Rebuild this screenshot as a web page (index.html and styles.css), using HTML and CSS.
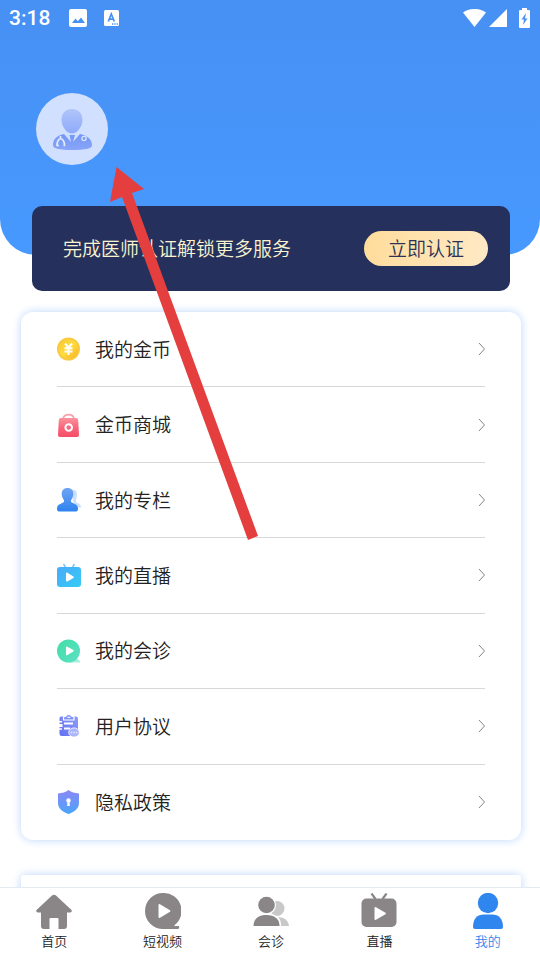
FILE: index.html
```html
<!DOCTYPE html>
<html lang="zh-CN">
<head>
<meta charset="utf-8">
<meta name="viewport" content="width=device-width, initial-scale=1">
<title>我的</title>
<link rel="stylesheet" href="styles.css">
</head>
<body>
<main class="page">
  <header class="hero">
    <div class="status">
      <span class="clock">3:18</span>
      <svg class="status-image" width="18" height="18" viewBox="0 0 18 18"><rect width="18" height="18" rx="2" fill="#fff"/><path d="M3 14l3.500-4.500 2.300 2.800L12 8.500l4 5.500z" fill="#4791f5"/></svg>
      <svg class="status-lang" width="15" height="16" viewBox="0 0 15 16"><rect width="15" height="16" rx="1.500" fill="#fff"/><path d="M4.300 11.500L7.300 4l3 7.500M5.300 9.200h4" fill="none" stroke="#4791f5" stroke-width="1.700"/><path d="M8 14h1.300M10.300 14h1.300M12.600 14h1.300" stroke="#4791f5" stroke-width="1.300"/></svg>
      <span class="status-right">
        <svg width="23" height="18" viewBox="0 0 23 18"><path d="M0 3.500C6.500-1.200 16.500-1.200 23 3.500L11.500 18z" fill="#fff"/></svg>
        <svg width="18" height="18" viewBox="0 0 18 18"><path d="M18 0v18H0z" fill="#fff"/></svg>
        <svg class="battery" width="11" height="20" viewBox="0 0 11 20"><path d="M3 0h5v2h2q1 0 1 1v16q0 1-1 1H1q-1 0-1-1V3q0-1 1-1h2z" fill="#fff"/><path d="M7 5L2.500 11.500H5L4 17l4.500-6.500H6z" fill="#4791f5"/></svg>
      </span>
    </div>
    <a class="avatar" href="#profile" aria-label="个人资料">
      <svg width="72" height="72" viewBox="0 0 72 72">
        <defs><linearGradient id="doc" x1="0" y1="0" x2="0" y2="1"><stop offset="0" stop-color="#b0c5fb"/><stop offset="1" stop-color="#8faafa"/></linearGradient><linearGradient id="coat" x1="0" y1="0" x2="0" y2="1"><stop offset="0" stop-color="#7596f3"/><stop offset="1" stop-color="#88a5fa"/></linearGradient></defs>
        <circle cx="36" cy="36" r="36" fill="#d0e0fe"/>
        <path d="M36 16c7 0 11 5 10.400 12-.4 6-5.400 12.500-10.400 12.500S26 34 25.600 28C25 21 29 16 36 16z" fill="url(#doc)"/>
        <path d="M28 41l7 8-1.500-7h5.500l-2 7L44 41c8 2 12 5.500 12 11.500 0 3-7 4.500-19.500 4.500S17 55.500 17 52.500C17 46.500 20 43 28 41z" fill="url(#coat)"/>
        <path d="M24.500 43v2.500c-2.500 1-3.500 3-3.500 7h2m4.500 0h1c0-4-1-6-4-7" fill="none" stroke="#e3edff" stroke-width="1.700"/>
        <circle cx="48" cy="45.500" r="2.100" fill="none" stroke="#d9e6ff" stroke-width="1.300"/>
      </svg>
    </a>
  </header>

  <section class="banner">
    <p class="banner-text">完成医师认证解锁更多服务</p>
    <button class="banner-button" type="button">立即认证</button>
  </section>

  <nav class="menu" aria-label="菜单">
    <a class="row" href="#coins">
      <svg class="icon" viewBox="0 0 24 24"><defs><linearGradient id="gold" x1="0" y1="0" x2="1" y2="1"><stop offset="0" stop-color="#f8c535"/><stop offset=".5" stop-color="#ffdc3e"/><stop offset="1" stop-color="#f8ad27"/></linearGradient></defs><circle cx="11.500" cy="12" r="11.500" fill="#f9c940"/><circle cx="11.500" cy="12" r="9.800" fill="url(#gold)"/><path d="M8 6.500l3.500 4L15 6.500M11.500 10.500v7.500M7.500 11.200h8M7.500 14.500h8" fill="none" stroke="#fff" stroke-width="2"/></svg>
      <span class="label">我的金币</span><svg class="chevron" viewBox="0 0 8 14"><path d="M2 1l5.500 6L2 13"/></svg>
    </a>
    <a class="row" href="#shop">
      <svg class="icon" viewBox="0 0 24 24"><defs><linearGradient id="bag" x1="0" y1="0" x2="0" y2="1"><stop offset="0" stop-color="#fa929c"/><stop offset=".5" stop-color="#f9657c"/><stop offset="1" stop-color="#f64d68"/></linearGradient></defs><path d="M6 6C7 .2 16.500 .2 17 6" fill="none" stroke="#f9a5ae" stroke-width="1.800"/><path d="M4 5h15q2 0 2.200 2L22 22q0 2-2 2H3q-2 0-2-2L1.800 7Q2 5 4 5z" fill="url(#bag)"/><circle cx="11.700" cy="14.500" r="3.300" fill="none" stroke="#fff" stroke-width="2"/></svg>
      <span class="label">金币商城</span><svg class="chevron" viewBox="0 0 8 14"><path d="M2 1l5.500 6L2 13"/></svg>
    </a>
    <a class="row" href="#columns">
      <svg class="icon" viewBox="0 0 24 24"><defs><linearGradient id="usr" x1="0" y1="0" x2="0" y2="1"><stop offset="0" stop-color="#70a4f3"/><stop offset="1" stop-color="#2d83ef"/></linearGradient></defs><path d="M13 1.500c8-1 7.500 5 6.500 8.500-1 4-1 4 2 5.500 2 1 2.500 2 2.500 4h-6z" fill="#cbdffb"/><path d="M10.500 0c5 0 6.500 4 5.500 8-.7 3-2.500 4-2 5.500.5 2 7 2 7 7 0 2.500-1 3-3 3H3c-2 0-3-.5-3-3 0-5 6.500-5 7-7C7.500 12 5.700 11 5 8 4 4 5.500 0 10.500 0z" fill="url(#usr)"/></svg>
      <span class="label">我的专栏</span><svg class="chevron" viewBox="0 0 8 14"><path d="M2 1l5.500 6L2 13"/></svg>
    </a>
    <a class="row" href="#live">
      <svg class="icon" viewBox="0 0 24 24"><defs><linearGradient id="tv" x1="0" y1="0" x2="1" y2="1"><stop offset="0" stop-color="#4aaaf8"/><stop offset="1" stop-color="#34ccf5"/></linearGradient></defs><path d="M6.500 1L9 5M17.500 1L15 5" stroke="#80c8f8" stroke-width="1.500"/><rect y="4" width="24" height="20" rx="3" fill="url(#tv)"/><path d="M9 10.500q0-1.500 1.400-.8l6 3.700q1 .8 0 1.500l-6 3.500Q9 19 9 17.500z" fill="#fff"/></svg>
      <span class="label">我的直播</span><svg class="chevron" viewBox="0 0 8 14"><path d="M2 1l5.500 6L2 13"/></svg>
    </a>
    <a class="row" href="#consult">
      <svg class="icon" viewBox="0 0 24 24"><defs><linearGradient id="green" x1="0" y1="0" x2="1" y2="1"><stop offset="0" stop-color="#43dda6"/><stop offset="1" stop-color="#5de1c6"/></linearGradient></defs><path d="M12 20l7-1 4 3v1.500H12z" fill="#aaf0df"/><circle cx="11.500" cy="12" r="11.500" fill="url(#green)"/><path d="M9 8.500q0-1.500 1.400-.8l6 3.300q1 .8 0 1.500l-6 3.500Q9 17 9 15.500z" fill="#fff"/></svg>
      <span class="label">我的会诊</span><svg class="chevron" viewBox="0 0 8 14"><path d="M2 1l5.500 6L2 13"/></svg>
    </a>
    <a class="row" href="#terms">
      <svg class="icon" viewBox="0 0 24 24"><defs><linearGradient id="clip" x1="1" y1="0" x2="0" y2="1"><stop offset="0" stop-color="#8e9dfa"/><stop offset="1" stop-color="#626ff0"/></linearGradient></defs><path d="M4 2.500h15q2 0 2 2V20q0 2-2 2H5q-2.500 0-2.500-2.500V4.500q0-2 1.500-2z" fill="url(#clip)"/><path d="M0 7.800h5M0 15h5" stroke="#fff" stroke-width="1.400"/><path d="M2 11.500h3.500" stroke="#fff" stroke-width="3"/><path d="M7 9.500h9M7 14.500h6" stroke="#fff" stroke-width="1.800"/><path d="M6.500 3L9 2q.8-1.700 2.700-1.700T14.500 2L17 3v3H6.500z" fill="#7f90f8" stroke="#fff" stroke-width="1.200"/><path d="M10.300 3.300h3" stroke="#fff" stroke-width="1.200"/><ellipse cx="17" cy="18.500" rx="5.300" ry="4.600" fill="#a9b5fb" stroke="#fff" stroke-width=".8"/><path d="M13.800 18.500h1.400M16.300 18.500h1.400M18.800 18.500h1.400" stroke="#e8ecff" stroke-width="1.300"/></svg>
      <span class="label">用户协议</span><svg class="chevron" viewBox="0 0 8 14"><path d="M2 1l5.500 6L2 13"/></svg>
    </a>
    <a class="row" href="#privacy">
      <svg class="icon" viewBox="0 0 24 24"><defs><linearGradient id="shield" x1="0" y1="0" x2="0" y2="1"><stop offset="0" stop-color="#8c87f5"/><stop offset="1" stop-color="#4aa5fb"/></linearGradient></defs><path d="M11.500 0c3 2.500 6 3 10.500 3.500V13c0 6-5 9-10.500 11C6 22 1 19 1 13V3.500C5.500 3 8.500 2.500 11.500 0z" fill="url(#shield)"/><circle cx="11.500" cy="10.500" r="2.200" fill="#fff"/><path d="M10.600 11h1.800l.5 5h-2.800z" fill="#fff"/></svg>
      <span class="label">隐私政策</span><svg class="chevron" viewBox="0 0 8 14"><path d="M2 1l5.500 6L2 13"/></svg>
    </a>
  </nav>
  <section class="next-card"></section>
</main>

<nav class="tabs" aria-label="主导航">
  <a class="tab" href="#home">
    <svg width="36" height="36" viewBox="0 0 36 36"><path d="M16 2.500q2-1.500 4 0L35.500 17q1 1.500-1 2.500H31V33q0 3-3 3h-5.500V26q0-1-1-1h-7q-1 0-1 1v10H8q-3 0-3-3V19.500H1.500q-2-1-1-2.500z" fill="#8a8687"/></svg>
    <span>首页</span></a>
  <a class="tab" href="#videos">
    <svg width="36" height="36" viewBox="0 0 36 36"><path d="M18 0a18 18 0 0 1 11.500 32.300q-.5.700.5.700h3.500q1 0 .7 1.500t-1.200 1.500H18A18 18 0 0 1 18 0z" fill="#8a8687"/><path d="M13.500 12q0-1.500 1.500-.8l10 6q1 .8 0 1.600l-10 6q-1.500.7-1.500-.8z" fill="#fff"/></svg>
    <span>短视频</span></a>
  <a class="tab" href="#consultation">
    <svg width="36" height="36" viewBox="0 0 36 36"><circle cx="24" cy="15.500" r="7.500" fill="#c9c8c9"/><path d="M18 33V27c7-5 17-3 18 6z" fill="#c9c8c9"/><circle cx="13.500" cy="12" r="9.500" fill="#fff"/><circle cx="13.500" cy="12" r="8.300" fill="#8a8687"/><path d="M0 34C-1 25 5 20.500 14 20.500S29 25 28 34z" fill="#fff"/><path d="M.5 33C.5 26 5 22 13.500 22s13 4 13 11z" fill="#8a8687"/></svg>
    <span>会诊</span></a>
  <a class="tab" href="#broadcast">
    <svg width="36" height="36" viewBox="0 0 36 36"><path d="M10.500.5L14.500 6M25.500.5L21.500 6" stroke="#8a8687" stroke-width="2.200"/><rect x=".5" y="5.500" width="35" height="28.500" rx="5" fill="#8a8687"/><path d="M13.500 15q0-1.500 1.500-.8l9.500 5.500q1 .8 0 1.600l-9.500 5.500q-1.500.7-1.500-.8z" fill="#fff"/></svg>
    <span>直播</span></a>
  <a class="tab active" href="#me" aria-current="page">
    <svg width="36" height="36" viewBox="0 0 36 36"><circle cx="18" cy="10" r="10.200" fill="#2f86ee"/><path d="M3 34C3 26 7 21.500 14 21.500h8c7 0 11 4.500 11 12.500q0 2-2 2H5q-2 0-2-2z" fill="#2f86ee"/></svg>
    <span>我的</span></a>
</nav>

<svg class="pointer" width="150" height="376" viewBox="0 0 150 376" aria-hidden="true"><path d="M8.500 1L36 23 24 27 150 370 140 374 14 31 2 36z" fill="#e53e3e"/></svg>
</body>
</html>
```
FILE: styles.css
```css
* {
  box-sizing: border-box;
}

body {
  margin: 0;
  height: 100vh;
  display: flex;
  flex-direction: column;
  position: relative;
  overflow: hidden;
  background: #fff;
  color: #222;
  font-family: "Noto Sans CJK SC", sans-serif;
  font-weight: 350;
}

a {
  color: inherit;
  text-decoration: none;
}

svg {
  display: block;
  flex: none;
}

.page {
  flex: 1;
  min-height: 0;
  overflow: hidden;
}

.hero {
  height: 255px;
  background: linear-gradient(#4790f4, #4799ff);
  border-radius: 0 0 36px 36px;
}

.status {
  display: flex;
  align-items: center;
  height: 36px;
  padding: 0 10px 0 9px;
  color: #fff;
}

.clock {
  font: 500 21px/36px Roboto, sans-serif;
}

.status-image {
  margin-left: 19px;
}

.status-lang {
  margin-left: 17px;
}

.status-right {
  display: flex;
  align-items: center;
  gap: 3px;
  margin-left: auto;
}

.battery {
  margin-left: 9px;
}

.avatar {
  display: block;
  width: 72px;
  margin: 57px 0 0 36px;
}

.banner {
  display: flex;
  align-items: center;
  justify-content: space-between;
  position: relative;
  height: 85px;
  margin: -49px 30px 21px 32px;
  padding: 0 22px 0 31px;
  border-radius: 10px;
  background: #25315c;
}

.banner-text {
  margin: 0;
  padding-bottom: 2px;
  color: #faf3cf;
  font-size: 19px;
}

.banner-button {
  height: 35px;
  padding: 0 24px 2px;
  border: 0;
  border-radius: 18px;
  background: linear-gradient(100deg, #ffdc9a, #ffe9c6);
  color: #2b3156;
  font: inherit;
  font-size: 19px;
  line-height: 33px;
}

.menu {
  display: grid;
  grid-auto-rows: 1fr;
  min-height: 528px;
  margin: 0 19px 35px 21px;
  padding: 0 36px;
  border-radius: 12px;
  background: #fff;
  box-shadow: 0 0 10px #bcd6fa;
}

.row {
  display: flex;
  align-items: center;
  border-bottom: 1px solid #d8d8d8;
}

.row:last-child {
  border-bottom: 0;
}

.icon {
  width: 24px;
  height: 24px;
}

.label {
  margin-left: 14px;
  padding-bottom: 2px;
  font-size: 19px;
}

.chevron {
  width: 8px;
  height: 14px;
  margin-left: auto;
  fill: none;
  stroke: #858585;
}

.next-card {
  height: 80px;
  margin: 0 19px 0 21px;
  border-radius: 3px;
  background: #fff;
  box-shadow: 0 0 10px #bcd6fa;
}

.tabs {
  display: grid;
  grid-template-columns: repeat(5, 1fr);
  position: relative;
  height: 73px;
  margin-right: -2px;
  padding-top: 5px;
  border-top: 1px solid #e4eaf2;
  background: #fff;
}

.tab {
  display: flex;
  flex-direction: column;
  align-items: center;
  font-size: 13px;
  line-height: 24px;
}

.active {
  color: #2f86ee;
}

.pointer {
  position: absolute;
  top: 166px;
  left: 108px;
  pointer-events: none;
}
```
